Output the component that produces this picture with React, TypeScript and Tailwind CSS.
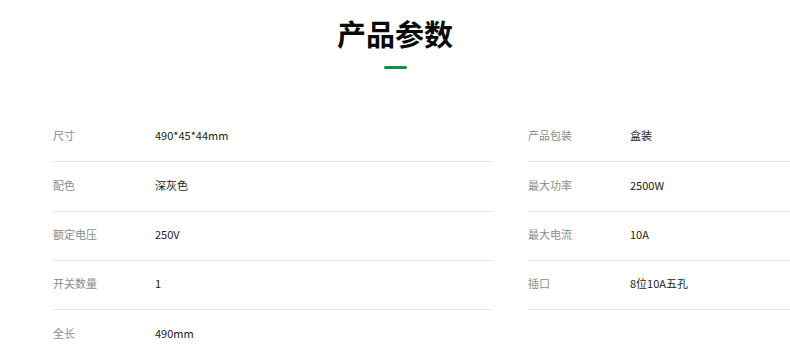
const left = [
  ['尺寸', '490*45*44mm'],
  ['配色', '深灰色'],
  ['额定电压', '250V'],
  ['开关数量', '1'],
  ['全长', '490mm'],
];

const right = [
  ['产品包装', '盒装'],
  ['最大功率', '2500W'],
  ['最大电流', '10A'],
  ['插口', '8位10A五孔'],
];

function Row({ label, value }: { label: string; value: string }) {
  return (
    <div className="flex h-[49.33px] items-center border-b border-[#e6e6e6] pb-[3px] text-[11px]">
      <span className="w-[102px] shrink-0 text-[#8c8c8c]">{label}</span>
      <span className="text-[#222]">{value}</span>
    </div>
  );
}

export default function App() {
  return (
    <div
      className="h-[358px] w-full overflow-hidden bg-white"
      style={{ fontFamily: '"Noto Sans CJK SC", "Noto Sans", sans-serif' }}
    >
      <div className="flex flex-col items-center pt-[13px]">
        <h2 className="text-[29px] font-bold leading-[40px] text-[#0a0a0a]">产品参数</h2>
        <div className="mt-[13px] h-[3px] w-[23px] rounded-full bg-[#0f9140]" />
      </div>
      <div className="ml-[53px] mt-[44px] grid w-[914px] grid-cols-2 gap-x-[36px]">
        <div>
          {left.map(([l, v]) => (
            <Row key={l} label={l} value={v} />
          ))}
        </div>
        <div>
          {right.map(([l, v]) => (
            <Row key={l} label={l} value={v} />
          ))}
        </div>
      </div>
    </div>
  );
}
